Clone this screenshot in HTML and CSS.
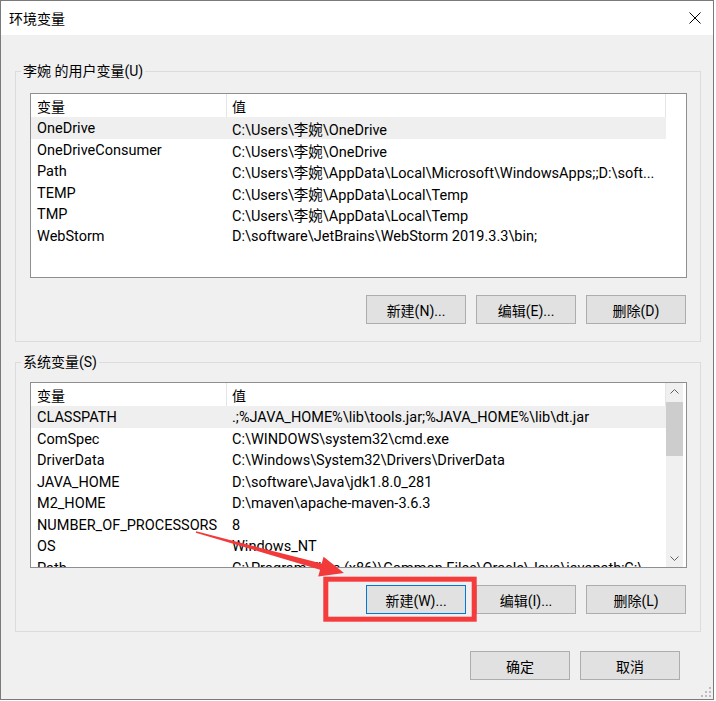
FILE: index.html
```html
<!DOCTYPE html>
<html>
<head>
    <meta charset="utf-8">
    <title>环境变量</title>
    <link rel="stylesheet" href="styles.css">
</head>
<body>
    <div class="window">
        <div class="titlebar">
            <span class="title">环境变量</span>
            <svg class="close" width="12" height="12" viewBox="0 0 12 12">
                <path d="M0.5 0.5 L11.5 11.5 M11.5 0.5 L0.5 11.5" stroke="#000" stroke-width="1" fill="none"/>
            </svg>
        </div>

        <div class="content">
            <fieldset class="group group-user">
                <legend>李婉 的用户变量(U)</legend>
                <div class="list list-user">
                    <div class="list-table">
                        <div class="list-head">
                            <span class="cell cell-name">变量</span>
                            <span class="cell cell-value">值</span>
                        </div>
                        <div class="row selected"><span class="cell cell-name">OneDrive</span><span class="cell cell-value">C:\Users\李婉\OneDrive</span></div>
                        <div class="row"><span class="cell cell-name">OneDriveConsumer</span><span class="cell cell-value">C:\Users\李婉\OneDrive</span></div>
                        <div class="row"><span class="cell cell-name">Path</span><span class="cell cell-value">C:\Users\李婉\AppData\Local\Microsoft\WindowsApps;;D:\soft...</span></div>
                        <div class="row"><span class="cell cell-name">TEMP</span><span class="cell cell-value">C:\Users\李婉\AppData\Local\Temp</span></div>
                        <div class="row"><span class="cell cell-name">TMP</span><span class="cell cell-value">C:\Users\李婉\AppData\Local\Temp</span></div>
                        <div class="row"><span class="cell cell-name">WebStorm</span><span class="cell cell-value">D:\software\JetBrains\WebStorm 2019.3.3\bin;</span></div>
                    </div>
                </div>
                <div class="buttons">
                    <button class="btn">新建(N)...</button>
                    <button class="btn">编辑(E)...</button>
                    <button class="btn">删除(D)</button>
                </div>
            </fieldset>

            <fieldset class="group group-system">
                <legend>系统变量(S)</legend>
                <div class="list list-system">
                    <div class="list-table">
                        <div class="list-head">
                            <span class="cell cell-name">变量</span>
                            <span class="cell cell-value">值</span>
                        </div>
                        <div class="row selected"><span class="cell cell-name">CLASSPATH</span><span class="cell cell-value">.;%JAVA_HOME%\lib\tools.jar;%JAVA_HOME%\lib\dt.jar</span></div>
                        <div class="row"><span class="cell cell-name">ComSpec</span><span class="cell cell-value">C:\WINDOWS\system32\cmd.exe</span></div>
                        <div class="row"><span class="cell cell-name">DriverData</span><span class="cell cell-value">C:\Windows\System32\Drivers\DriverData</span></div>
                        <div class="row"><span class="cell cell-name">JAVA_HOME</span><span class="cell cell-value">D:\software\Java\jdk1.8.0_281</span></div>
                        <div class="row"><span class="cell cell-name">M2_HOME</span><span class="cell cell-value">D:\maven\apache-maven-3.6.3</span></div>
                        <div class="row"><span class="cell cell-name">NUMBER_OF_PROCESSORS</span><span class="cell cell-value">8</span></div>
                        <div class="row"><span class="cell cell-name">OS</span><span class="cell cell-value">Windows_NT</span></div>
                        <div class="row"><span class="cell cell-name">Path</span><span class="cell cell-value">C:\Program Files (x86)\Common Files\Oracle\Java\javapath;C:\W...</span></div>
                    </div>
                    <div class="scrollbar">
                        <div class="scroll-btn">
                            <svg width="17" height="17" viewBox="0 0 17 17"><polyline points="4.5,10.5 8.5,6.5 12.5,10.5" stroke="#606060" fill="none"/></svg>
                        </div>
                        <div class="scroll-track"><div class="scroll-thumb"></div></div>
                        <div class="scroll-btn">
                            <svg width="17" height="17" viewBox="0 0 17 17"><polyline points="4.5,6.5 8.5,10.5 12.5,6.5" stroke="#606060" fill="none"/></svg>
                        </div>
                    </div>
                </div>
                <div class="buttons">
                    <button class="btn btn-focus">新建(W)...</button>
                    <button class="btn">编辑(I)...</button>
                    <button class="btn">删除(L)</button>
                </div>
            </fieldset>

            <div class="footer">
                <button class="btn">确定</button>
                <button class="btn">取消</button>
            </div>
        </div>

        <svg class="grip" width="12" height="12" viewBox="0 0 12 12" fill="#bdbdbd">
            <rect x="9" y="1" width="2" height="2"/>
            <rect x="5" y="5" width="2" height="2"/>
            <rect x="9" y="5" width="2" height="2"/>
            <rect x="1" y="9" width="2" height="2"/>
            <rect x="5" y="9" width="2" height="2"/>
            <rect x="9" y="9" width="2" height="2"/>
        </svg>
    </div>

    <!-- annotation drawn over the screenshot -->
    <svg class="annot" width="716" height="701" viewBox="0 0 716 701">
        <polygon points="196.2,531.3 321.7,563.5 323.6,556.8 344,573 318.2,576.4 320.1,569.7 195.8,532.7" fill="#f23a3a"/>
        <rect x="325.8" y="579.2" width="148.4" height="40" fill="none" stroke="#f53b3b" stroke-width="5"/>
    </svg>
</body>
</html>
```

FILE: styles.css
```css
body {
    margin: 0;
    background: #ffffff;
    font-family: Roboto, "Noto Sans CJK SC", sans-serif;
    font-size: 14px;
    color: #000;
    position: relative;
    width: 716px;
    height: 701px;
    overflow: hidden;
}

.window {
    position: relative;
    width: 712px;
    height: 698px;
    border: 1px solid #7a7a7a;
    background: #f0f0f0;
}

.titlebar {
    height: 34px;
    background: #ffffff;
    display: flex;
    align-items: center;
    justify-content: space-between;
    padding: 0 12px 0 8px;
}

.close {
    display: block;
}

.content {
    padding: 27px 12px 0 14px;
}

.group {
    margin: 0;
    padding: 13px 13px 17px 14px;
    border: 1px solid #dcdcdc;
    min-width: 0;
}

.group-system {
    margin-top: 11px;
    padding-top: 11px;
    padding-bottom: 17px;
}

.group legend {
    padding: 0 2px;
    margin-left: -9px;
    line-height: 18px;
}

.list {
    display: flex;
    border: 1px solid #8f8f8f;
    background: #ffffff;
    overflow: hidden;
}

.list-user {
    height: 183px;
}

.list-system {
    height: 184px;
}

.list-table {
    width: 635px;
    flex: none;
}

.list-head {
    display: flex;
    height: 23px;
}

.row {
    display: flex;
    align-items: center;
    box-sizing: border-box;
    height: 21.5px;
    padding-top: 2px;
    font-size: 14.5px;
}

.row.selected {
    background: #efefef;
}

.cell {
    box-sizing: border-box;
    white-space: nowrap;
    overflow: hidden;
}

.list-head .cell {
    display: flex;
    align-items: center;
    border-right: 1px solid #e5e5e5;
}

.cell-name {
    width: 196px;
    padding-left: 6px;
}

.cell-value {
    width: 439px;
    padding: 0 6px 0 5px;
    text-overflow: ellipsis;
}

.scrollbar {
    width: 17px;
    flex: none;
    display: flex;
    flex-direction: column;
    background: #f0f0f0;
}

.scroll-btn {
    height: 17px;
}

.scroll-btn svg {
    display: block;
}

.scroll-track {
    flex: 1;
}

.scroll-thumb {
    margin-top: 2px;
    height: 54px;
    background: #cdcdcd;
}

.buttons {
    display: flex;
    justify-content: flex-end;
    gap: 10px;
    margin-top: 17px;
    padding-right: 1px;
}

.btn {
    width: 100px;
    height: 29px;
    padding: 0;
    border: 1px solid #adadad;
    background: #e1e1e1;
    font: inherit;
    color: #000;
}

.btn-focus {
    border-color: #0078d7;
}

.footer {
    display: flex;
    justify-content: flex-end;
    gap: 10px;
    margin-top: 19px;
    padding-right: 21px;
}

.grip {
    position: absolute;
    right: 1px;
    bottom: 1px;
}

.annot {
    position: absolute;
    left: 0;
    top: 0;
    pointer-events: none;
}
```
